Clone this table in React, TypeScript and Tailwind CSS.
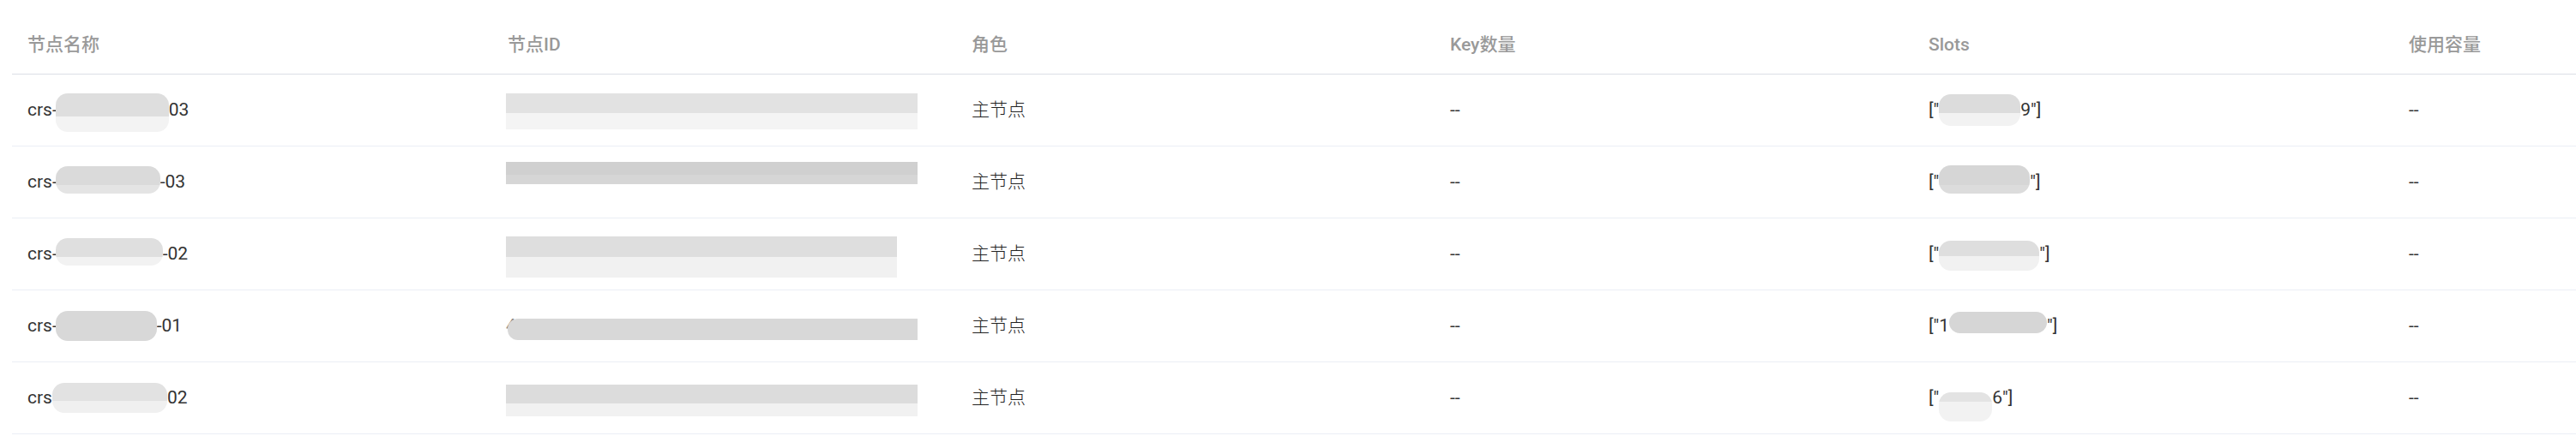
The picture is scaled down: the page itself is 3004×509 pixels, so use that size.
import React from "react";

type B = { w: number; h: number; dy?: number; top?: string; bot?: string; split?: number; round?: string; ml?: number };

function Blur({ w, h, dy = 0, top = "#dedede", bot = "#f3f3f3", split = 0.6, round = "rounded-[14px]", ml = 0 }: B) {
  return (
    <span
      className={`inline-flex flex-col overflow-hidden align-middle ${round}`}
      style={{ width: w, height: h, transform: `translateY(${dy}px)`, marginLeft: ml }}
    >
      <span className="block w-full" style={{ height: h * split, background: top }} />
      <span className="block w-full flex-1" style={{ background: bot }} />
    </span>
  );
}

type Row = {
  name: React.ReactNode;
  id: React.ReactNode;
  slots: React.ReactNode;
};

const rows: Row[] = [
  {
    name: (
      <>
        crs-
        <Blur w={132} h={45} dy={3} ml={-2} />
        03
      </>
    ),
    id: <Blur w={480} h={42} dy={1} top="#e2e2e2" bot="#f4f4f4" split={0.57} round="rounded-none" />,
    slots: (
      <>
        ["
        <Blur w={95} h={37} dy={0} top="#dcdcdc" bot="#f2f2f2" split={0.6} />
        9"]
      </>
    ),
  },
  {
    name: (
      <>
        crs-
        <Blur w={122} h={32} dy={-3} top="#dadada" bot="#e4e4e4" split={0.7} ml={-2} />
        -03
      </>
    ),
    id: <Blur w={480} h={26} dy={-11} top="#d0d0d0" bot="#d6d6d6" split={0.6} round="rounded-none" />,
    slots: (
      <>
        ["
        <Blur w={106} h={33} dy={-3} top="#d6d6d6" bot="#dcdcdc" split={0.7} />
        "]
      </>
    ),
  },
  {
    name: (
      <>
        crs-
        <Blur w={125} h={32} dy={-3} top="#dfdfdf" bot="#f2f2f2" split={0.7} ml={-2} />
        -02
      </>
    ),
    id: <Blur w={456} h={48} dy={3} top="#dedede" bot="#f1f1f1" split={0.5} round="rounded-none" />,
    slots: (
      <>
        ["
        <Blur w={117} h={35} dy={2} top="#dedede" bot="#f1f1f1" split={0.5} />
        "]
      </>
    ),
  },
  {
    name: (
      <>
        crs-
        <Blur w={118} h={35} dy={0} top="#d8d8d8" bot="#d8d8d8" split={0.6} ml={-2} />
        -01
      </>
    ),
    id: (
      <>
        <span className="text-[#888]">4</span>
        <Blur w={478} h={25} dy={4} top="#d8d8d8" bot="#d8d8d8" split={0.6} round="rounded-l-[12px]" ml={-10} />
      </>
    ),
    slots: (
      <>
        ["1
        <Blur w={114} h={25} dy={-4} top="#d6d6d6" bot="#d6d6d6" split={0.6} />
        "]
      </>
    ),
  },
  {
    name: (
      <>
        crs
        <Blur w={134} h={35} dy={0} top="#e2e2e2" bot="#f0f0f0" split={0.6} />
        02
      </>
    ),
    id: <Blur w={480} h={37} dy={3} top="#dcdcdc" bot="#f1f1f1" split={0.6} round="rounded-none" />,
    slots: (
      <>
        ["
        <Blur w={62} h={34} dy={10} top="#e3e3e3" bot="#f2f2f2" split={0.35} />
        6"]
      </>
    ),
  },
];

const cols = "grid grid-cols-[560px_541px_558px_558px_560px_560px]";

export default function App() {
  return (
    <div
      className="w-[3004px] h-[509px] overflow-hidden bg-white"
      style={{ fontFamily: "Roboto, 'Noto Sans CJK SC', sans-serif" }}
    >
      <div className="ml-[14px] w-[3337px]">
        <div className={`${cols} h-[87px] border-b border-[#dcdfe6] text-[21px] font-medium text-[#999999]`}>
          {["节点名称", "节点ID", "角色", "Key数量", "Slots", "使用容量"].map((h) => (
            <div key={h} className="flex items-center pl-[18px] pt-[19px]">
              {h}
            </div>
          ))}
        </div>
        {rows.map((r, i) => (
          <div key={i} className={`${cols} h-[84px] border-b border-[#ebeef5] text-[21px] text-[#333333]`}>
            <div className="flex items-center pl-[18px] whitespace-nowrap">{r.name}</div>
            <div className="flex items-center pl-[16px] whitespace-nowrap">{r.id}</div>
            <div className="flex items-center pl-[18px] font-light text-[#222]">主节点</div>
            <div className="flex items-center pl-[18px]">--</div>
            <div className="flex items-center pl-[18px] whitespace-nowrap">{r.slots}</div>
            <div className="flex items-center pl-[18px]">--</div>
          </div>
        ))}
      </div>
    </div>
  );
}
